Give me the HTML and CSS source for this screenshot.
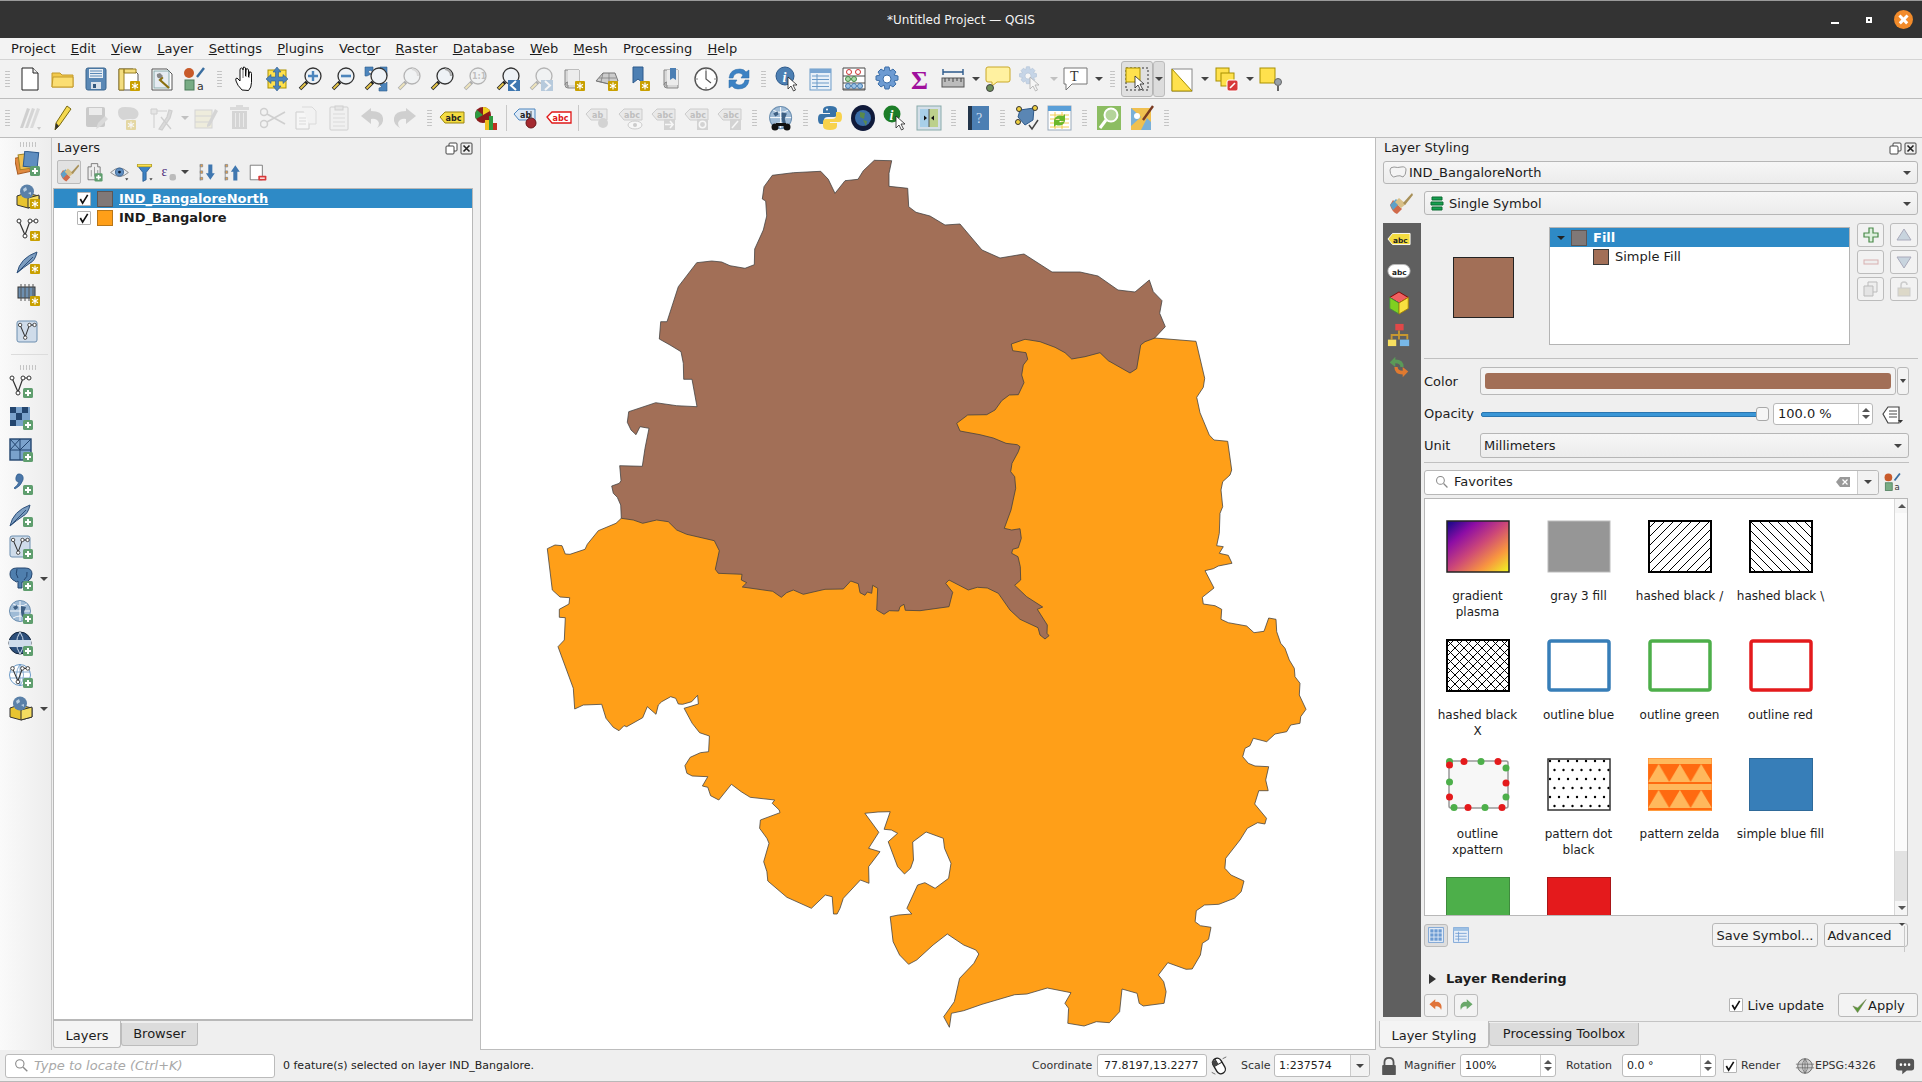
FILE: index.html
```html
<!DOCTYPE html>
<html lang="en">
<head>
<meta charset="utf-8">
<title>*Untitled Project — QGIS</title>
<link rel="stylesheet" href="styles.css">
</head>
<body>
<svg class="defs" xmlns="http://www.w3.org/2000/svg">
<defs>
<linearGradient id="plasma" x1="0" y1="0" x2="1" y2="1"><stop offset="0" stop-color="#0d0887"/><stop offset=".25" stop-color="#8d0da5"/><stop offset=".5" stop-color="#cc4778"/><stop offset=".75" stop-color="#f89540"/><stop offset="1" stop-color="#f0f921"/></linearGradient>
<pattern id="hf" width="9" height="9" patternUnits="userSpaceOnUse"><path d="M-1 10L10-1M-1 1L1-1M8 10l2-2" stroke="#000" stroke-width="1"/></pattern>
<pattern id="hb" width="9" height="9" patternUnits="userSpaceOnUse"><path d="M-1-1L10 10M-1 8l2 2M8-1l2 2" stroke="#000" stroke-width="1"/></pattern>
<pattern id="hx" width="9" height="9" patternUnits="userSpaceOnUse"><path d="M-1 10L10-1M-1-1L10 10" stroke="#000" stroke-width="1"/></pattern>
<pattern id="dots" width="9" height="18" patternUnits="userSpaceOnUse"><circle cx="3" cy="3" r="1.200" fill="#000"/><circle cx="7.500" cy="12" r="1.200" fill="#000"/></pattern>
<pattern id="zel" width="21.3" height="26" patternUnits="userSpaceOnUse"><rect width="21.3" height="26" fill="#ff6a10"/><rect width="21.3" height="6" fill="#ffb85c"/><path d="M10.6 6L21.3 24H0z" fill="#ffb85c"/></pattern>
<g id="gb"><rect width="10" height="10" rx="1" fill="#c9a000"/><path d="M5 1.5v7M2 3.2l6 3.6M2 6.8l6-3.6" stroke="#fff" stroke-width="1.2"/></g>
<g id="pb"><rect width="10" height="10" rx="1.5" fill="#5f9e6e"/><path d="M5 2v6M2 5h6" stroke="#fff" stroke-width="2"/></g>
<g id="cur"><path d="M0 0v12l3-3 2.5 5 2-1-2.5-5H9z" fill="#fff" stroke="#222" stroke-width=".8"/></g>
<g id="mg"><circle cx="16" cy="10" r="8" fill="#eef2f6" stroke="#333" stroke-width="1.3"/><path d="M10 16L3 23" stroke="#222" stroke-width="3.6"/><path d="M8.5 17.5L3.5 22.5" stroke="#e8c84a" stroke-width="1.8"/></g>
<g id="vv"><path d="M4 5l6 14 5-14h6" fill="none" stroke="#333" stroke-width="1.2"/><circle cx="4" cy="5" r="2" fill="#fff" stroke="#333"/><circle cx="15" cy="5" r="2" fill="#fff" stroke="#333"/><circle cx="21" cy="5" r="2" fill="#fff" stroke="#333"/><circle cx="10" cy="20" r="2" fill="#fff" stroke="#333"/></g>
<g id="gl"><circle cx="12" cy="12" r="10.5" fill="#9fbbd6" stroke="#6c8fb0"/><path d="M2 12h20M12 2v20M5 5q7 4 14 0M5 19q7-4 14 0" fill="none" stroke="#fff" stroke-width=".9"/><path d="M5 8l4-2 1 3-3 2zM13 7l5 1-2 5 1 4-3 1-1-5z" fill="#3e5f82"/></g>
<g id="fe"><path d="M2 24Q5 9 22 3q-2 9-7 11-6 4-13 10z" fill="#7c9dc0" stroke="#2d4f7a"/><path d="M3 23L18 8" stroke="#2d4f7a"/></g>
<g id="bx"><path d="M2 12l9-3 13 3v9l-11 3-11-3z" fill="#e8c430" stroke="#333"/><path d="M13 24V14l11-3v10z" fill="#f4dc60" stroke="#333"/><circle cx="12" cy="7.5" r="7" fill="#5a80a8"/><path d="M8 5l3-2 1 3-3 2zM13 9l3-1 0 3z" fill="#b8cde0"/></g>
<g id="sc"><path d="M4 4h14v18H7q-3 0-3-3z" fill="#d8d8d8" stroke="#888"/><path d="M4 19q0-3 3-3v6" fill="#b0b0b0" stroke="#888"/><path d="M7 4h11v15H7z" fill="#ececec"/></g>
<symbol id="new" viewBox="0 0 26 26"><path d="M5 2h11l5 5v17H5z" fill="#fff" stroke="#222"/><path d="M16 2v5h5" fill="#eee" stroke="#222"/></symbol>
<symbol id="open" viewBox="0 0 26 26"><path d="M2 21V7h8l2 2h11v12z" fill="#f2c94c" stroke="#c39a2a"/><path d="M3 11h20v10H2z" fill="#fbde72" stroke="#c39a2a"/></symbol>
<symbol id="save" viewBox="0 0 26 26"><rect x="3" y="2" width="20" height="22" rx="2" fill="#5a88b5" stroke="#39648e"/><rect x="6" y="3" width="14" height="9" fill="#e8eef4"/><path d="M7 5h12M7 7.5h12M7 10h12" stroke="#5a88b5"/><rect x="8" y="16" width="10" height="7" fill="#d7e0ea"/><rect x="10" y="18" width="3" height="4" fill="#33587e"/></symbol>
<symbol id="lay" viewBox="0 0 26 26"><path d="M3 3h14l5 5v16H3z" fill="#fff" stroke="#555"/><path d="M3 3h5v21H3zM8 3h12v4H8z" fill="#f3dd80" stroke="#997f20"/><use href="#gb" x="14" y="15"/></symbol>
<symbol id="lm" viewBox="0 0 26 26"><path d="M3 3h15l5 5v16H3z" fill="#fff" stroke="#555"/><rect x="5" y="5" width="15" height="17" fill="#e6ecf2" stroke="#8aa"/><path d="M10 9l3 3-2 2 9 8" stroke="#8a7010" stroke-width="2.2" fill="none"/><path d="M8 8q-1 5 4 4l2-2-3-3z" fill="#888"/></symbol>
<symbol id="sty" viewBox="0 0 26 26"><circle cx="7" cy="7" r="5" fill="#c85a2a"/><path d="M15 11L22 2" stroke="#3a6ea0" stroke-width="2.4"/><rect x="3" y="14" width="9" height="10" fill="#78ac84" stroke="#4a7a58"/><text class="t11" x="15" y="24">a</text></symbol>
<symbol id="hand" viewBox="0 0 26 26"><g transform="translate(2 0)"><path d="M9 24q-5-5-6-9-1-3 1-3l3 3V4q0-2 1.500-2t1.500 2l.5-3q1.500 0 2 1v8l.5-7q2-1 2.500 1v7l1-5q2-.5 2 1.500v9q0 5-3 8z" fill="#fff" stroke="#111"/><path d="M10 4v8M13 3v8M16 5v7" stroke="#111" stroke-width=".6"/></g></symbol>
<symbol id="pan" viewBox="0 0 26 26"><rect x="4" y="4" width="18" height="18" fill="#ffe14d" stroke="#aa9000"/><path d="M13 1l4 5h-2.500v5H19V8.500l5 4.500-5 4.500V15h-4.500v5H17l-4 5-4-5h2.500v-5H7v2.500L2 13l5-4.500V11h4.500V6H9z" fill="#4c85bd" stroke="#2d5a8c" stroke-width=".6"/></symbol>
<symbol id="zi" viewBox="0 0 26 26"><use href="#mg"/><path d="M16 5v10M11 10h10" stroke="#4c85bd" stroke-width="2.4"/></symbol>
<symbol id="zo" viewBox="0 0 26 26"><use href="#mg"/><path d="M11 10h10" stroke="#4c85bd" stroke-width="2.6"/></symbol>
<symbol id="zf" viewBox="0 0 26 26"><path d="M2 1h8v5L7 4 5 6l3 2-4 2H2zM24 1v9h-3l-1-2 2-3-2-2-3 2V1zM24 25h-8v-3l3-1-2-2 3-3 2 2 2-2z" fill="#4c85bd" stroke="#2d5a8c" stroke-width=".6"/><use href="#mg"/></symbol>
<symbol id="zl" viewBox="0 0 26 26"><use href="#mg"/><path d="M16 3q6 1 6 7" fill="none" stroke="#aaa" stroke-width="2"/></symbol>
<symbol id="zn" viewBox="0 0 26 26"><use href="#mg"/><text class="t8" x="10" y="13">1:1</text></symbol>
<symbol id="zp" viewBox="0 0 26 26"><use href="#mg"/><rect x="13" y="14" width="12" height="11" fill="#3f77b0"/><path d="M21 15l-5 4.500 5 4.500" fill="none" stroke="#fff" stroke-width="2"/></symbol>
<symbol id="zx" viewBox="0 0 26 26"><use href="#mg"/><rect x="13" y="14" width="12" height="11" fill="#3f77b0"/><path d="M17 15l5 4.500-5 4.500" fill="none" stroke="#fff" stroke-width="2"/></symbol>
<symbol id="nm" viewBox="0 0 26 26"><use href="#sc"/><use href="#gb" x="14" y="15"/></symbol>
<symbol id="d3" viewBox="0 0 26 26"><path d="M2 15l7-8h12l3 8-9 3z" fill="#ccc" stroke="#777"/><path d="M9 7l-2 9M15 7l0 11M5 12h17M3 15l12 3" stroke="#777" stroke-width=".7"/><use href="#gb" x="14" y="15"/></symbol>
<symbol id="nb" viewBox="0 0 26 26"><path d="M6 1h10v16l-5-4-5 4z" fill="#4c7fb3" stroke="#2d5a8c"/><use href="#gb" x="13" y="15"/></symbol>
<symbol id="sb" viewBox="0 0 26 26"><use href="#sc"/><path d="M10 2h6v12l-3-2-3 2z" fill="#4c7fb3"/></symbol>
<symbol id="clk" viewBox="0 0 26 26"><circle cx="13" cy="13" r="11" fill="#fff" stroke="#555" stroke-width="1.4"/><path d="M13 5v8l5 4" fill="none" stroke="#555" stroke-width="1.2"/><path d="M13 3v2M13 21v2M3 13h2M21 13h2" stroke="#888"/></symbol>
<symbol id="ref" viewBox="0 0 26 26"><path d="M3 12q1-9 11-9 4 0 6 3l3-2v8h-8l2-3q-2-2-4-2-5 0-6 5z" fill="#3c82c4" stroke="#2a68a4" stroke-width=".5"/><path d="M23 14q-1 9-11 9-4 0-6-3l-3 2v-8h8l-2 3q2 2 4 2 5 0 6-5z" fill="#3c82c4" stroke="#2a68a4" stroke-width=".5"/></symbol>
<symbol id="idn" viewBox="0 0 26 26"><circle cx="10" cy="10" r="9" fill="#4c7fb3" stroke="#2d5a8c"/><text class="ti" x="7.500" y="16">i</text><use href="#cur" x="13" y="11"/></symbol>
<symbol id="tbl" viewBox="0 0 26 26"><rect x="2" y="3" width="21" height="21" fill="#e8f0f8" stroke="#6d9bc8"/><rect x="2" y="3" width="21" height="4" fill="#7aa6d2"/><path d="M4 10h17M4 13.500h17M4 17h17M4 20.500h17M9 8v15" stroke="#6d9bc8"/></symbol>
<symbol id="aba" viewBox="0 0 26 26"><path d="M2 2v22h22V2" fill="#fff" stroke="#555"/><path d="M2 2h22M2 23h22M2 10h22M2 17h22" stroke="#444"/><circle cx="8" cy="6" r="2.500" fill="#fff" stroke="#c33"/><circle cx="17" cy="6" r="2.500" fill="#fff" stroke="#c33"/><circle cx="7" cy="13" r="2.500" fill="#a8d8a8" stroke="#484"/><circle cx="13" cy="13" r="2.500" fill="#a8d8a8" stroke="#484"/><circle cx="7" cy="20" r="2.500" fill="#9cc4e8" stroke="#47a"/><circle cx="13" cy="20" r="2.500" fill="#9cc4e8" stroke="#47a"/><circle cx="19" cy="20" r="2.500" fill="#9cc4e8" stroke="#47a"/></symbol>
<symbol id="gear" viewBox="0 0 26 26"><path d="M11 1h4l1 4 3-2 3 3-2 3 4 1v4l-4 1 2 3-3 3-3-2-1 4h-4l-1-4-3 2-3-3 2-3-4-1v-4l4-1-2-3 3-3 3 2z" fill="#6d9bd2" stroke="#3c6ea8"/><circle cx="13" cy="13" r="4" fill="#fff" stroke="#3c6ea8"/></symbol>
<symbol id="sum" viewBox="0 0 26 26"><text class="ts" x="4" y="23">Σ</text></symbol>
<symbol id="rul" viewBox="0 0 26 26"><rect x="2" y="12" width="22" height="9" fill="#bcbcbc" stroke="#555"/><path d="M5 12v4M9 12v3M13 12v4M17 12v3M21 12v4" stroke="#444"/><path d="M3 6h20M3 3v6M23 3v6" stroke="#2d5a8c" stroke-width="1.4"/></symbol>
<symbol id="tip" viewBox="0 0 26 26"><path d="M3 1h20q2 0 2 2v11q0 2-2 2H12l-5 4V16H3q-2 0-2-2V3q0-2 2-2z" fill="#fff1a0" stroke="#c9a828"/><circle cx="5" cy="22" r="3.500" fill="#6d8f5a" stroke="#444"/></symbol>
<symbol id="act" viewBox="0 0 26 26"><use href="#gear" width="20" height="20"/><use href="#cur" x="12" y="11"/></symbol>
<symbol id="tx" viewBox="0 0 26 26"><path d="M1 2h23v16H9l-6 6v-6H1z" fill="#fff" stroke="#777"/><text class="tt" x="7" y="15">T</text></symbol>
<symbol id="sel" viewBox="0 0 26 26"><rect x="2" y="2" width="22" height="22" fill="none" stroke="#333" stroke-dasharray="2 2"/><rect x="2" y="2" width="14" height="14" fill="#ffe14d" stroke="#a89000"/><use href="#cur" x="11" y="10"/></symbol>
<symbol id="spo" viewBox="0 0 26 26"><rect x="3" y="3" width="20" height="22" fill="#fff" stroke="#888"/><path d="M3 3v22h20z" fill="#ffe14d" stroke="#a89000"/></symbol>
<symbol id="dsl" viewBox="0 0 26 26"><rect x="2" y="2" width="13" height="13" fill="#ffe14d" stroke="#a89000"/><rect x="7" y="7" width="13" height="13" fill="#ffe14d" stroke="#a89000"/><rect x="13" y="14" width="11" height="11" rx="2" fill="#d8393a" stroke="#fff"/><path d="M16 22l5-5" stroke="#fff" stroke-width="1.6"/></symbol>
<symbol id="spi" viewBox="0 0 26 26"><rect x="1" y="2" width="15" height="15" fill="#ffe14d" stroke="#a89000"/><circle cx="19" cy="16" r="3.500" fill="#98a0a8" stroke="#666"/><path d="M19 20v5" stroke="#666" stroke-width="2"/></symbol>
<symbol id="ced" viewBox="0 0 26 26"><path d="M3 23L10 3l3 1-7 19z" fill="#888"/><path d="M8 23L15 3l3 1-7 19z" fill="#999"/><path d="M13 23L20 3l3 1-7 19z" fill="#aaa"/><path d="M20 22l2 3 2-3z" fill="#777"/></symbol>
<symbol id="pen" viewBox="0 0 26 26"><path d="M5 25l1-7L17 1l4 3L9 21z" fill="#f5d94e" stroke="#7a6a10"/><path d="M5 25l1-7 3 3z" fill="#333"/></symbol>
<symbol id="sed" viewBox="0 0 26 26"><rect x="3" y="2" width="19" height="20" rx="2" fill="#777"/><rect x="6" y="3" width="13" height="7" fill="#ddd"/><path d="M13 24l2-6 7-7 3 3-7 7z" fill="#aaa"/></symbol>
<symbol id="spa" viewBox="0 0 26 26"><path d="M2 7q0-5 7-5 6 0 9 1 6 3 4 8-2 4-7 3-4 0-8 1-5-2-5-8z" fill="#999"/><use href="#gb" x="10" y="15"/></symbol>
<symbol id="dig" viewBox="0 0 26 26"><path d="M2 4h6v5H2zM5 9v14M8 6h10" stroke="#888" fill="#ccc"/><path d="M10 24l8-12 2-7 3 1-2 7-8 12zM12 12l10 12" fill="#aaa" stroke="#888" stroke-width="1.300"/></symbol>
<symbol id="mod" viewBox="0 0 26 26"><rect x="1" y="5" width="17" height="18" fill="#e6e0b0" stroke="#999"/><path d="M1 11h17M1 17h17" stroke="#999"/><path d="M13 20L21 4l3 2-8 15-3 1z" fill="#999"/></symbol>
<symbol id="del" viewBox="0 0 26 26"><rect x="3" y="2" width="19" height="3" fill="#aaa"/><rect x="9" y="0" width="7" height="3" fill="#aaa"/><path d="M5 6h15v18H5z" fill="#999"/><path d="M8.500 8v14M12.500 8v14M16.500 8v14" stroke="#ddd"/></symbol>
<symbol id="cut" viewBox="0 0 26 26"><circle cx="4" cy="7" r="3.500" fill="none" stroke="#888" stroke-width="1.500"/><circle cx="4" cy="19" r="3.500" fill="none" stroke="#888" stroke-width="1.500"/><path d="M7 9l18 10M7 17L25 7" stroke="#888" stroke-width="1.600"/></symbol>
<symbol id="cop" viewBox="0 0 26 26"><path d="M3 7h10l3 3v14H3z" fill="#fff" stroke="#888"/><path d="M9 2h10l4 4v13h-7" fill="#f4f4f4" stroke="#aaa"/><path d="M6 13h7M6 16h7M6 19h7" stroke="#aaa"/></symbol>
<symbol id="pas" viewBox="0 0 26 26"><rect x="4" y="2" width="18" height="23" rx="1" fill="#eee" stroke="#888"/><rect x="9" y="1" width="8" height="4" fill="#ccc" stroke="#888"/><path d="M7 9h12M7 13h12M7 17h12M7 21h12" stroke="#aaa"/></symbol>
<symbol id="und" viewBox="0 0 26 26"><path d="M12 3L2 11l10 8v-5q6-1 8 4 0 3-2 5 7-4 6-10-1-7-12-7z" fill="#888"/></symbol>
<symbol id="red" viewBox="0 0 26 26"><path d="M14 3l10 8-10 8v-5q-6-1-8 4 0 3 2 5-7-4-6-10 1-7 12-7z" fill="#888"/></symbol>
<symbol id="abc" viewBox="0 0 26 26"><path d="M1 12l5-5h19v11H6z" fill="#f4dc40" stroke="#9a8410"/><text class="t8b" x="6.500" y="16">abc</text></symbol>
<symbol id="pie" viewBox="0 0 26 26"><g transform="translate(2 0)"><circle cx="8" cy="10" r="8" fill="#8a1c1c"/><path d="M8 10V2a8 8 0 0 1 7 4z" fill="#f0d020"/><path d="M8 10L1 14a8 8 0 0 1 1-9z" fill="#2e9a40"/><rect x="10" y="15" width="4" height="10" fill="#f0c020"/><rect x="14" y="11" width="4" height="14" fill="#2e9a40"/><rect x="18" y="18" width="4" height="7" fill="#c03020"/></g></symbol>
<symbol id="abb" viewBox="0 0 26 26"><path d="M1 9l5-5h16v11H6z" fill="#dbe8f6" stroke="#4c85bd"/><text class="t8b" x="7" y="13">ab</text><circle cx="18" cy="18" r="5" fill="#a42a30" stroke="#6a1518"/><path d="M18 6v8" stroke="#555"/></symbol>
<symbol id="abr" viewBox="0 0 26 26"><path d="M1 12l5-5h19v11H6z" fill="#fff" stroke="#e01818" stroke-width="1.300"/><text class="t8r" x="6.500" y="16">abc</text></symbol>
<symbol id="abg" viewBox="0 0 26 26"><path d="M1 9l5-5h16v11H6z" fill="#ddd" stroke="#999"/><text class="t8g" x="7" y="13">ab</text><circle cx="18" cy="18" r="5" fill="#aaa"/></symbol>
<symbol id="abe" viewBox="0 0 26 26"><path d="M1 9l5-5h18v11H6z" fill="#ddd" stroke="#999"/><text class="t8g" x="6" y="13">abc</text><ellipse cx="17" cy="20" rx="7" ry="4" fill="#fff" stroke="#999"/><circle cx="17" cy="20" r="2" fill="#999"/></symbol>
<symbol id="abm" viewBox="0 0 26 26"><path d="M1 9l5-5h18v11H6z" fill="#ddd" stroke="#999"/><text class="t8g" x="6" y="13">abc</text><rect x="13" y="14" width="11" height="11" fill="#aaa"/><path d="M14 19.500h8M19 16l3 3.500-3 3.500" fill="none" stroke="#fff" stroke-width="1.600"/></symbol>
<symbol id="abo" viewBox="0 0 26 26"><path d="M1 9l5-5h18v11H6z" fill="#ddd" stroke="#999"/><text class="t8g" x="6" y="13">abc</text><rect x="13" y="14" width="11" height="11" fill="#aaa"/><circle cx="18.500" cy="19.500" r="3.200" fill="none" stroke="#fff" stroke-width="1.500"/></symbol>
<symbol id="abp" viewBox="0 0 26 26"><path d="M1 9l5-5h18v11H6z" fill="#ddd" stroke="#999"/><text class="t8g" x="6" y="13">abc</text><rect x="13" y="14" width="11" height="11" fill="#aaa"/><path d="M15 23l6-7" stroke="#fff" stroke-width="1.600"/></symbol>
<symbol id="bin" viewBox="0 0 26 26"><use href="#gl" transform="scale(1.050)"/><circle cx="7" cy="22" r="3.500" fill="#111"/><circle cx="19" cy="22" r="3.500" fill="#111"/><path d="M8 18h10v3H8z" fill="#111"/></symbol>
<symbol id="py" viewBox="0 0 26 26"><path d="M13 1q-7 0-7 4v3h7v1H4q-3 0-3 5t3 5h3v-4q0-3 4-3h6q3 0 3-3V5q0-4-7-4z" fill="#3873a8"/><path d="M13 25q7 0 7-4v-3h-7v-1h9q3 0 3-5t-3-5h-3v4q0 3-4 3H9q-3 0-3 3v4q0 4 7 4z" fill="#f8d24c"/><circle cx="10" cy="4.500" r="1" fill="#fff"/></symbol>
<symbol id="ear" viewBox="0 0 26 26"><ellipse cx="13" cy="13" rx="12" ry="13" fill="#101a3a"/><circle cx="13" cy="13" r="8" fill="#3a6ea8"/><path d="M10 7l5 1-1 6-4-2zM13 15l4 1-1 5z" fill="#5a8a4a"/></symbol>
<symbol id="idg" viewBox="0 0 26 26"><circle cx="9" cy="9" r="8.500" fill="#1c7d28"/><text class="ti" x="6.500" y="15">i</text><use href="#cur" x="13" y="11"/></symbol>
<symbol id="swp" viewBox="0 0 26 26"><rect x="1" y="1" width="24" height="24" fill="#d4dfe8" stroke="#8aa"/><rect x="4" y="4" width="9" height="18" fill="#a8cfe8"/><rect x="13" y="4" width="9" height="18" fill="#bcd08c"/><path d="M13 4v18" stroke="#555"/><path d="M11 13l-3-2.500v5zM15 13l3-2.500v5z" fill="#111"/></symbol>
<symbol id="hlp" viewBox="0 0 26 26"><rect x="3" y="1" width="21" height="24" fill="#4c7fb3"/><rect x="3" y="1" width="4" height="24" fill="#23354a"/><text class="tq" x="11" y="18">?</text></symbol>
<symbol id="qas" viewBox="0 0 26 26"><path d="M6 5l14-2-1 12-8 5-7-8z" fill="#5a86b4" stroke="#2d5a8c"/><circle cx="5" cy="4" r="2.500" fill="#f0d040" stroke="#333"/><circle cx="21" cy="3" r="2.500" fill="#f0d040" stroke="#333"/><circle cx="4" cy="17" r="2.500" fill="#f0d040" stroke="#333"/><path d="M15 20l3 4 6-9" fill="none" stroke="#444" stroke-width="1.500"/></symbol>
<symbol id="tsy" viewBox="0 0 26 26"><rect x="1" y="1" width="23" height="24" fill="#fff" stroke="#9ab"/><rect x="1" y="1" width="23" height="5" fill="#5a9fd8"/><path d="M3 10h19M3 14h19M3 18h19M3 22h19M8 7v17M15 7v17" stroke="#f0c840" stroke-width=".9"/><path d="M7 15q2-6 9-4l2-2v7h-7l2-2q-3-1-5 1zM18 16q-2 6-9 4l-2 2v-7h7l-2 2q3 1 5-1z" fill="#6ab82c"/></symbol>
<symbol id="osm" viewBox="0 0 26 26"><rect x="1" y="1" width="24" height="24" fill="#8cbd62"/><circle cx="15" cy="10" r="6.500" fill="#b4d49a" stroke="#fff" stroke-width="2"/><path d="M10 15l-6 8" stroke="#fff" stroke-width="3"/></symbol>
<symbol id="qc" viewBox="0 0 26 26"><rect x="2" y="3" width="20" height="22" fill="#f0c050"/><path d="M2 3l10 9L2 21zM12 25l6-12 4 4v8z" fill="#7ab0d8"/><circle cx="8" cy="11" r="3" fill="#fff"/><path d="M14 15L24 1" stroke="#7a3a20" stroke-width="2.400"/></symbol>
<symbol id="dsm" viewBox="0 0 26 26"><rect x="1" y="6" width="13" height="16" transform="rotate(-12 7 14)" fill="#e08a40" stroke="#a85a20"/><rect x="4" y="3" width="13" height="15" transform="rotate(-8 10 10)" fill="#f0c050" stroke="#a08020"/><rect x="9" y="1" width="14" height="15" transform="rotate(6 16 8)" fill="#5f8ec0" stroke="#2d5a8c"/><use href="#pb" x="15" y="15"/></symbol>
<symbol id="gpk" viewBox="0 0 26 26"><use href="#bx"/><use href="#gb" x="15" y="15"/></symbol>
<symbol id="vg" viewBox="0 0 26 26"><use href="#vv"/><use href="#gb" x="15" y="15"/></symbol>
<symbol id="feg" viewBox="0 0 26 26"><use href="#fe"/><use href="#gb" x="15" y="15"/></symbol>
<symbol id="chg" viewBox="0 0 26 26"><rect x="3" y="6" width="17" height="11" fill="#6d8fb0" stroke="#333"/><path d="M6 3v17M10 3v17M14 3v17M18 3v17" stroke="#555"/><use href="#gb" x="15" y="15"/></symbol>
<symbol id="vm" viewBox="0 0 26 26"><rect x="2" y="2" width="20" height="21" rx="2" fill="#cfdcea" stroke="#6d8fb0"/><use href="#vv" transform="scale(.85) translate(2 2)"/></symbol>
<symbol id="av" viewBox="0 0 26 26"><use href="#vv"/><use href="#pb" x="15" y="15"/></symbol>
<symbol id="ar" viewBox="0 0 26 26"><rect x="2" y="2" width="20" height="19" fill="#7aa2cc"/><path d="M2 2h6v6H2zM14 2h6v6h-6zM8 8h6v7H8zM2 15h6v6H2z" fill="#23456e"/><use href="#pb" x="15" y="15"/></symbol>
<symbol id="am" viewBox="0 0 26 26"><rect x="2" y="2" width="21" height="21" fill="#7aa2cc" stroke="#23456e" stroke-width="1.400"/><path d="M12 2v21M2 13h21M2 2l10 11M12 2L2 13M12 13L23 2" stroke="#23456e"/><use href="#pb" x="15" y="15"/></symbol>
<symbol id="ad" viewBox="0 0 26 26"><path d="M8 7q1-4 4-3 4 1 3 6-2 6-8 9l-1-1q4-3 5-6-4 0-3-5z" fill="#4a76a8" stroke="#2d5a8c" stroke-width=".7"/><use href="#pb" x="15" y="15"/></symbol>
<symbol id="af" viewBox="0 0 26 26"><use href="#fe"/><use href="#pb" x="15" y="15"/></symbol>
<symbol id="avm" viewBox="0 0 26 26"><rect x="2" y="2" width="20" height="21" rx="2" fill="#cfdcea" stroke="#6d8fb0"/><use href="#vv" transform="scale(.85) translate(2 2)"/><use href="#pb" x="15" y="15"/></symbol>
<symbol id="apg" viewBox="0 0 26 26"><path d="M2 8q0-6 7-6h8q7 0 7 6 0 5-4 7v6h-3v-5h-3v6h-4v-7Q8 17 7 15 2 13 2 8z" fill="#4f7fae" stroke="#23456e"/><path d="M9 3q-2 5 1 9M19 6q1 5-3 8" fill="none" stroke="#23456e"/><use href="#pb" x="15" y="15"/></symbol>
<symbol id="aw" viewBox="0 0 26 26"><use href="#gl"/><use href="#pb" x="15" y="15"/></symbol>
<symbol id="awc" viewBox="0 0 26 26"><circle cx="12" cy="12" r="11" fill="#2d4f7a" stroke="#12233a"/><path d="M1 9h22v7H1z" fill="#cfdcea"/><path d="M12 1q-7 11 0 22M12 1q7 11 0 22" fill="none" stroke="#cfdcea"/><use href="#pb" x="15" y="15"/></symbol>
<symbol id="awf" viewBox="0 0 26 26"><circle cx="12" cy="12" r="10.500" fill="#fff" stroke="#6d9bc8"/><path d="M2 9h20M2 15h20M12 1v22M12 1q-7 11 0 22M12 1q7 11 0 22" fill="none" stroke="#6d9bc8" stroke-width=".8"/><use href="#vv" transform="scale(.9) translate(1 1)"/><use href="#pb" x="15" y="15"/></symbol>
<symbol id="brs" viewBox="0 0 26 26"><path d="M5 10l9 9-5 5q-5-2-7-9z" fill="#d06a4a"/><path d="M2 15l6-6 4 4-7 7z" fill="#5fa0c8"/><path d="M13 18l-6-6 4-4 7 6z" fill="#d8c088"/><path d="M15 13l9-10 1 2-8 10z" fill="#a89058"/></symbol>
<symbol id="grp" viewBox="0 0 26 26"><path d="M5 6h4V2h8v4h3v16H5z" fill="#eee" stroke="#666"/><path d="M9 10v8M13 6v12M17 10v8" stroke="#888"/><use href="#pb" x="13" y="14"/></symbol>
<symbol id="eye" viewBox="0 0 26 26"><path d="M2 13q11-11 22 0-11 10-22 0z" fill="#e4eaf0" stroke="#777"/><circle cx="13" cy="12.500" r="5" fill="#5f8ec0" stroke="#2d5a8c"/><circle cx="13" cy="12.500" r="1.800" fill="#12233a"/><path d="M20 20l2 3 2-3z" fill="#444"/></symbol>
<symbol id="fil" viewBox="0 0 26 26"><path d="M4 4h18l-7 9v9l-4 2V13z" fill="#3c82c4" stroke="#2a5a8c"/><rect x="4" y="3" width="18" height="3" fill="#ffe14d" stroke="#a89000" stroke-width=".6"/><path d="M19 20l2 3 2-3z" fill="#444"/></symbol>
<symbol id="eps" viewBox="0 0 26 26"><text class="te" x="3" y="17">ε</text><rect x="13" y="15" width="8" height="8" rx="3" fill="#bbb"/></symbol>
<symbol id="exa" viewBox="0 0 26 26"><path d="M4 3v20M4 3h3v3H4zM4 11h3v3H4zM4 19h3v3H4z" fill="#f0a040" stroke="#888"/><path d="M14 3h5v11h3l-5.500 8L11 14h3z" fill="#3f77b0"/></symbol>
<symbol id="cola" viewBox="0 0 26 26"><path d="M4 3v20M4 3h3v3H4zM4 11h3v3H4zM4 19h3v3H4z" fill="#f0a040" stroke="#888"/><path d="M14 23h5V12h3L16.500 4 11 12h3z" fill="#3f77b0"/></symbol>
<symbol id="rem" viewBox="0 0 26 26"><path d="M4 4h15v18H4z" fill="#fff" stroke="#666"/><rect x="14" y="17" width="10" height="6" rx="1" fill="#d8393a"/><path d="M16 20h6" stroke="#fff" stroke-width="1.600"/></symbol>
<symbol id="slab" viewBox="0 0 26 26"><path d="M1 13l5-6h19v12H6z" fill="#f4dc40" stroke="#fff"/><text class="t8b" x="6.500" y="17">abc</text></symbol>
<symbol id="sdia" viewBox="0 0 26 26"><rect x="1" y="6" width="24" height="14" rx="7" fill="#fff" stroke="#bbb"/><text class="t8b" x="5.500" y="17">abc</text></symbol>
<symbol id="s3d" viewBox="0 0 26 26"><path d="M13 1l10 6-10 6L3 7z" fill="#f06060" stroke="#800"/><path d="M3 7l10 6v12L3 19z" fill="#80d020" stroke="#484"/><path d="M23 7l-10 6v12l10-6z" fill="#f8e040" stroke="#a80"/></symbol>
<symbol id="sfl" viewBox="0 0 26 26"><rect x="9" y="1" width="9" height="7" fill="#e04848"/><path d="M13 8v5M5 18v-5h17v5M13 13v5" fill="none" stroke="#c89830" stroke-width="2"/><rect x="1" y="18" width="9" height="7" fill="#f8e060"/><rect x="14" y="18" width="10" height="7" fill="#78b8e8"/></symbol>
<symbol id="shi" viewBox="0 0 26 26"><path d="M3 8l6-6v3q9 0 9 8h-3.500q0-4-5.500-4v4z" fill="#5a9a58"/><path d="M23 18l-6 6v-3q-9 0-9-8h3.500q0 4 5.500 4v-4z" fill="#e07a30"/></symbol>
<symbol id="gi" viewBox="0 0 22 22"><rect x="2" y="2" width="18" height="18" fill="#e6eef8" stroke="#6d9bd2"/><g fill="#6d9bd2"><rect x="4" y="4" width="4" height="4"/><rect x="9" y="4" width="4" height="4"/><rect x="14" y="4" width="4" height="4"/><rect x="4" y="9" width="4" height="4"/><rect x="9" y="9" width="4" height="4"/><rect x="14" y="9" width="4" height="4"/><rect x="4" y="14" width="4" height="4"/><rect x="9" y="14" width="4" height="4"/><rect x="14" y="14" width="4" height="4"/></g></symbol>
<symbol id="li" viewBox="0 0 22 22"><rect x="2" y="2" width="18" height="18" fill="#e6eef8" stroke="#6d9bd2"/><rect x="2" y="2" width="18" height="4" fill="#9cc0e4"/><path d="M4 9h14M4 12.500h14M4 16h14M8 7v12" stroke="#6d9bd2"/></symbol>
<symbol id="ddf" viewBox="0 0 22 22"><path d="M1 11l5-7h11v16H6z" fill="#fff" stroke="#444" stroke-width="1.200"/><path d="M7 8h8M7 11h8M7 14h8" stroke="#444"/><path d="M16 17l2.500 3 2.500-3z" fill="#333"/></symbol>
<symbol id="lk" viewBox="0 0 22 22"><path d="M6 10V7q0-5 5-5t5 5v3" fill="none" stroke="#555" stroke-width="2"/><rect x="3.500" y="10" width="15" height="11" rx="1" fill="#555"/></symbol>
<symbol id="mse" viewBox="0 0 22 22"><g transform="rotate(-30 11 11)"><rect x="6" y="2" width="10" height="18" rx="5" fill="#fff" stroke="#222" stroke-width="1.500"/><path d="M6 9h10M11 2v7" stroke="#222"/><rect x="6" y="3" width="5" height="6" fill="#444"/></g><path d="M15 3l4-2M3 18l4 2" stroke="#666"/></symbol>
<symbol id="gls" viewBox="0 0 22 22"><circle cx="11" cy="11" r="8" fill="#d0d0d0" stroke="#666"/><path d="M1 9h20M1 13h20M11 3v16M11 3q-6 8 0 16M11 3q6 8 0 16" fill="none" stroke="#666" stroke-width=".8"/></symbol>
<symbol id="msg" viewBox="0 0 22 22"><path d="M4 3h14q3 0 3 3v7q0 3-3 3h-5l-5 4v-4H4q-3 0-3-3V6q0-3 3-3z" fill="#555"/><circle cx="6.500" cy="9.500" r="1.400" fill="#fff"/><circle cx="11" cy="9.500" r="1.400" fill="#fff"/><circle cx="15.500" cy="9.500" r="1.400" fill="#fff"/></symbol>
<symbol id="srch" viewBox="0 0 18 18"><circle cx="7" cy="7" r="5" fill="none" stroke="#888" stroke-width="1.300"/><path d="M11 11l5 5" stroke="#888" stroke-width="1.600"/></symbol>
<symbol id="chk" viewBox="0 0 13 13"><path d="M2.500 6.500l2.500 4.500 5.500-9" fill="none" stroke="#111" stroke-width="1.800"/></symbol>
<symbol id="flt" viewBox="0 0 13 13"><rect x="4" y="1" width="8" height="8" rx="1" fill="#fff" stroke="#444"/><rect x="1" y="4" width="8" height="8" rx="1" fill="#fff" stroke="#444"/></symbol>
<symbol id="cls" viewBox="0 0 13 13"><rect x="1" y="1" width="11" height="11" rx="1" fill="#eee" stroke="#444"/><path d="M3.500 3.500l6 6M9.500 3.500l-6 6" stroke="#222" stroke-width="1.600"/></symbol>
</defs>
</svg>

<div class="window">
  <header class="titlebar">
    <span></span>
    <span class="title">*Untitled Project — QGIS</span>
    <span class="winbtns"><i class="wmin"></i><i class="wmax"></i><i class="wcls"></i></span>
  </header>
  <nav class="menubar">
    <span class="m">Project</span><span class="m"><u>E</u>dit</span><span class="m"><u>V</u>iew</span><span class="m"><u>L</u>ayer</span><span class="m"><u>S</u>ettings</span><span class="m"><u>P</u>lugins</span><span class="m">Vect<u>o</u>r</span><span class="m"><u>R</u>aster</span><span class="m"><u>D</u>atabase</span><span class="m"><u>W</u>eb</span><span class="m"><u>M</u>esh</span><span class="m">Pr<u>o</u>cessing</span><span class="m"><u>H</u>elp</span>
  </nav>
  <div class="toolbar">
    <span class="h first"></span>
    <span class="b"><svg class="i"><use href="#new"/></svg></span><span class="b"><svg class="i"><use href="#open"/></svg></span><span class="b"><svg class="i"><use href="#save"/></svg></span><span class="b"><svg class="i"><use href="#lay"/></svg></span><span class="b"><svg class="i"><use href="#lm"/></svg></span><span class="b"><svg class="i"><use href="#sty"/></svg></span>
    <span class="h"></span>
    <span class="b"><svg class="i"><use href="#hand"/></svg></span><span class="b"><svg class="i"><use href="#pan"/></svg></span><span class="b"><svg class="i"><use href="#zi"/></svg></span><span class="b"><svg class="i"><use href="#zo"/></svg></span><span class="b"><svg class="i"><use href="#zf"/></svg></span><span class="b dis"><svg class="i"><use href="#zl"/></svg></span><span class="b"><svg class="i"><use href="#zl"/></svg></span><span class="b dis"><svg class="i"><use href="#zn"/></svg></span><span class="b"><svg class="i"><use href="#zp"/></svg></span><span class="b dis"><svg class="i"><use href="#zx"/></svg></span><span class="b"><svg class="i"><use href="#nm"/></svg></span><span class="b"><svg class="i"><use href="#d3"/></svg></span><span class="b"><svg class="i"><use href="#nb"/></svg></span><span class="b"><svg class="i"><use href="#sb"/></svg></span><span class="b"><svg class="i"><use href="#clk"/></svg></span><span class="b"><svg class="i"><use href="#ref"/></svg></span>
    <span class="h"></span>
    <span class="b"><svg class="i"><use href="#idn"/></svg></span><span class="b"><svg class="i"><use href="#tbl"/></svg></span><span class="b"><svg class="i"><use href="#aba"/></svg></span><span class="b"><svg class="i"><use href="#gear"/></svg></span><span class="b"><svg class="i"><use href="#sum"/></svg></span><span class="b"><svg class="i"><use href="#rul"/></svg></span><span class="ar"></span><span class="b"><svg class="i"><use href="#tip"/></svg></span><span class="b dis"><svg class="i"><use href="#act"/></svg></span><span class="ar dim"></span><span class="b"><svg class="i"><use href="#tx"/></svg></span><span class="ar"></span>
    <span class="h"></span>
    <span class="b on"><svg class="i"><use href="#sel"/></svg></span><span class="dropbtn"><i></i></span><span class="b"><svg class="i"><use href="#spo"/></svg></span><span class="ar"></span><span class="b"><svg class="i"><use href="#dsl"/></svg></span><span class="ar"></span><span class="b"><svg class="i"><use href="#spi"/></svg></span>
  </div>
  <div class="toolbar">
    <span class="h first"></span>
    <span class="b dis"><svg class="i"><use href="#ced"/></svg></span><span class="b"><svg class="i"><use href="#pen"/></svg></span><span class="b dis"><svg class="i"><use href="#sed"/></svg></span><span class="b dis"><svg class="i"><use href="#spa"/></svg></span><span class="b dis"><svg class="i"><use href="#dig"/></svg></span><span class="ar dim"></span><span class="b dis"><svg class="i"><use href="#mod"/></svg></span><span class="b dis"><svg class="i"><use href="#del"/></svg></span><span class="b dis"><svg class="i"><use href="#cut"/></svg></span><span class="b dis"><svg class="i"><use href="#cop"/></svg></span><span class="b dis"><svg class="i"><use href="#pas"/></svg></span><span class="b dis"><svg class="i"><use href="#und"/></svg></span><span class="b dis"><svg class="i"><use href="#red"/></svg></span>
    <span class="h short"></span>
    <span class="b"><svg class="i"><use href="#abc"/></svg></span><span class="b wide"><svg class="i"><use href="#pie"/></svg></span><span class="s"></span><span class="b"><svg class="i"><use href="#abb"/></svg></span><span class="b"><svg class="i"><use href="#abr"/></svg></span><span class="s"></span><span class="b faint"><svg class="i"><use href="#abg"/></svg></span><span class="b faint"><svg class="i"><use href="#abe"/></svg></span><span class="b faint"><svg class="i"><use href="#abm"/></svg></span><span class="b faint"><svg class="i"><use href="#abo"/></svg></span><span class="b faint"><svg class="i"><use href="#abp"/></svg></span>
    <span class="h tall"></span>
    <span class="b"><svg class="i"><use href="#bin"/></svg></span>
    <span class="h"></span>
    <span class="b"><svg class="i"><use href="#py"/></svg></span><span class="b"><svg class="i"><use href="#ear"/></svg></span><span class="b"><svg class="i"><use href="#idg"/></svg></span><span class="b"><svg class="i"><use href="#swp"/></svg></span>
    <span class="h"></span>
    <span class="b"><svg class="i"><use href="#hlp"/></svg></span>
    <span class="h"></span>
    <span class="b"><svg class="i"><use href="#qas"/></svg></span><span class="b"><svg class="i"><use href="#tsy"/></svg></span>
    <span class="h"></span>
    <span class="b"><svg class="i"><use href="#osm"/></svg></span><span class="b"><svg class="i"><use href="#qc"/></svg></span>
    <span class="h"></span>
  </div>

  <main class="work">
    <aside class="lefttb">
      <span class="vh"></span>
      <span class="lb top"><svg class="i"><use href="#dsm"/></svg></span>
      <span class="lb"><svg class="i"><use href="#gpk"/></svg></span>
      <span class="lb"><svg class="i"><use href="#vg"/></svg></span>
      <span class="lb"><svg class="i"><use href="#feg"/></svg></span>
      <span class="lb"><svg class="i"><use href="#chg"/></svg></span>
      <span class="lb last"><svg class="i"><use href="#vm"/></svg></span>
      <span class="vsep"></span>
      <span class="vh second"></span>
      <span class="lb2"><svg class="i"><use href="#av"/></svg></span>
      <span class="lb2"><svg class="i"><use href="#ar"/></svg></span>
      <span class="lb2"><svg class="i"><use href="#am"/></svg></span>
      <span class="lb2"><svg class="i"><use href="#ad"/></svg></span>
      <span class="lb2"><svg class="i"><use href="#af"/></svg></span>
      <span class="lb2"><svg class="i"><use href="#avm"/></svg></span>
      <span class="lb2"><svg class="i"><use href="#apg"/></svg><span class="ar"></span></span>
      <span class="lb2"><svg class="i"><use href="#aw"/></svg></span>
      <span class="lb2"><svg class="i"><use href="#awc"/></svg></span>
      <span class="lb2"><svg class="i"><use href="#awf"/></svg></span>
      <span class="lb2"><svg class="i"><use href="#bxi"/></svg><span class="ar"></span></span>
    </aside>

    <section class="layers">
      <div class="phead"><span>Layers</span><span class="pbtns"><svg class="pi"><use href="#flt"/></svg><svg class="pi"><use href="#cls"/></svg></span></div>
      <div class="ltools">
        <span class="lt on"><svg class="i2"><use href="#brs"/></svg></span><span class="lt"><svg class="i2"><use href="#grp"/></svg></span><span class="lt"><svg class="i2"><use href="#eye"/></svg></span><span class="lt"><svg class="i2"><use href="#fil"/></svg></span><span class="lt"><svg class="i2"><use href="#eps"/></svg></span><span class="ar sm"></span><span class="lt"><svg class="i2"><use href="#exa"/></svg></span><span class="lt"><svg class="i2"><use href="#cola"/></svg></span><span class="lt"><svg class="i2"><use href="#rem"/></svg></span>
      </div>
      <div class="ltree">
        <div class="lrow sel"><span class="cb"><svg><use href="#chk"/></svg></span><span class="sw north"></span><b class="u">IND_BangaloreNorth</b></div>
        <div class="lrow"><span class="cb"><svg><use href="#chk"/></svg></span><span class="sw south"></span><b>IND_Bangalore</b></div>
      </div>
      <div class="tabs"><span class="tab act w68">Layers</span><span class="tab w77">Browser</span></div>
    </section>

    <section class="map">
      <svg class="mapsvg" viewBox="481 138 894 911">
        <polygon class="north-p" points="621.3,518.3 620.7,505 617.3,497.3 613.3,493.3 611.7,486 619.3,483.3 621,480.7 619.7,465.7 642.3,466.3 645,448.3 649,428.3 640,426.7 636,434.7 631,430 627.3,422.3 628.7,411.7 655.7,402.7 676.7,405.7 697,406.7 692,379.3 683.7,379.3 683.3,363.3 681,351.7 670,345 659.3,339 660.7,321.7 667,321.7 678.3,286.7 696.7,262.7 711.7,261 721.7,262 730,265.7 745,268.3 754.3,264.7 754.7,249 763.3,230 766.7,216 765.7,201 762.3,199 764,186.7 772.3,175.3 793.3,172.7 820.7,171.3 828.3,179.3 835,193.3 845,180.7 858,179.3 863.3,170.7 874.3,160.3 891.7,160.7 889,173.3 889,186.3 907.7,188.3 908.7,206.7 916,212.3 930,216 945,225 960,224 982,250 1000,258 1024,254 1052,272 1080,272 1098,276 1118,290 1135,292 1149.3,280 1153.3,291.7 1162,300.7 1159.7,313.3 1165.3,326.7 1155,337.7 1060,660 640,600"/>
        <polygon class="south-p" points="621.3,518.3 633.3,520 642.7,523.3 656.7,520 668.3,521.7 676.7,530 686.7,534.3 714.3,540.7 719.3,550.7 715.3,569.3 718.3,573.3 742,574.3 741.3,580 746.7,582.7 742.3,587 772.7,591.3 781.3,597.3 786.7,592.7 793.3,590 803.3,594.3 825,589.3 843.3,589 850.7,581 858.3,583.7 860,592.7 865,595.3 867.3,592 871.7,593.3 872.7,585.3 877.7,588.3 876.7,610 884,614.3 889.3,610.7 898.7,611 900,606.7 904,604.3 905.3,610.3 920,610.7 949,606.7 952.7,592.3 945.7,583.3 949,580 968.3,590 977.3,587.3 987.3,588 998.3,593.3 1010,610 1020,619.3 1038,627.7 1040,635 1045,639 1049,635.7 1047,633.3 1047.3,625 1037.3,609.3 1042.7,607 1026.7,596.7 1014.7,585.3 1020.7,580 1020.3,566.7 1018,556.7 1011.7,553.3 1012.7,549.3 1018.3,547.7 1021.3,538.3 1020,528.7 1011.7,530 1004.3,528.3 1011,510 1015.7,488.3 1014.7,476.7 1010.7,471.7 1012,463.3 1018.3,451.7 1020,446.7 1017.3,444.7 1006,443.3 993.3,438 980,434.7 960,431 956.7,423.3 967.7,415 986.7,414.7 995,410 1001.7,400.7 1009.3,395 1018.3,394.7 1024,382.7 1021.7,375 1023.3,365 1027.7,359.3 1026,352.7 1012.7,350.7 1011.3,344 1025,339.3 1040,341.7 1055,347.3 1065,352.7 1071.7,359 1085,356.7 1100,352.7 1108.3,360.7 1130,373 1136.7,368.7 1140.7,345 1145,341.7 1155,338 1196,341.3 1204.7,378.3 1203.3,387.3 1196.7,397.3 1200,412.7 1209.3,435 1214,440 1227.7,441.3 1231.7,470 1230,475 1222.7,481.7 1221,490 1222.7,506.7 1220,513.3 1219.3,533.3 1216.7,545.7 1223.3,546.7 1219.3,553.3 1228.3,555.3 1232,563.3 1218.3,566 1213.3,568.7 1205,570.7 1214,588 1202.3,597.3 1203.3,604 1215,605.7 1221.7,609.3 1221,619.3 1228.3,622.7 1246.7,626 1254,632.7 1264,631.3 1268.7,618 1276,619.3 1276.7,631.7 1280.7,643.3 1285,648.3 1289.3,660 1294.3,668.3 1295,676.7 1300,683.3 1299.3,695 1306,709.3 1300.7,716.7 1300,723.3 1290.7,725 1286.7,731.7 1275,734 1266.7,741.7 1253.3,738.3 1250,745.7 1245,748.3 1242.7,756.7 1248.3,763.3 1255,766 1268.7,766.7 1265.7,780 1268.2,790.7 1258.8,790.7 1254.7,804 1266.5,818.3 1264.9,824 1257.6,822.7 1247.3,828.3 1240,840 1225.7,858.3 1224.9,868.3 1231,875 1244,881 1241.2,891.7 1234.3,898.3 1218.8,904.3 1204.5,905 1196.3,910.7 1195.1,921.7 1200.4,925.7 1211,927.3 1208.6,939.3 1202.4,943.3 1200.4,955 1192.2,969 1186.1,969.3 1167.8,962.7 1158.4,975 1163.7,981.7 1166.1,991.7 1164.1,1003.3 1143.3,1006 1139.2,1003.3 1137.1,993.3 1122,989 1119.6,1011.7 1109.4,1022.7 1096.3,1021.7 1084.1,1026 1067.8,1023.3 1068.6,1008.3 1064.9,1003.3 1071,992.7 1047.3,988 1026.9,994 1014.7,994.7 982,1004.3 963.7,1010.7 951.4,1013.3 949.4,1027.3 943.7,1016.7 954.3,1001.7 959.6,978.3 973.9,963.3 978.8,954 975.9,950 963.7,945 947.3,934 933.1,945 916.7,960 908.6,964.3 899.6,955 893.1,941.7 890.2,916.7 898.4,915 911.8,914 906.9,908.3 917.6,885 924.9,882.7 935.1,888.3 948.6,878.3 951,863.3 944.5,848.3 943.3,838.3 926.1,832 912.7,842 913.5,860 910.6,868.3 904.5,874 897.6,866.7 888.2,841.7 897.6,833.3 891.4,830 884.1,829.3 890.2,811.7 878,812 864.9,813.3 878.8,832.3 868.6,848.3 880,851.7 868.6,866.7 869,883.3 860.4,880 843.3,898.3 840,908.3 837.1,914 833.5,914 832.2,896.7 825.3,895 811.4,908.3 786.9,897.3 767.8,881 766.9,871.7 763.7,861.7 769,843.3 766.9,838.3 759.6,828.3 760.4,820 780,812.7 779.2,810 772.2,803.3 774.7,800 750.2,797.3 741.2,791.7 731.4,784.3 718.8,800 710.6,795.7 707.8,787.3 702.4,786 707.8,776.7 692.2,776 686.9,773.3 684.9,765.7 690.2,757.3 700.4,752.7 708.6,751.7 709.4,736 699.6,732.7 692.2,723.3 684.1,708.3 698.4,704 697.6,695.3 691.7,701.7 682.7,704.3 678.3,704 675.7,698.3 670.7,696.7 661.7,701.7 658.3,705 656,714.3 647.3,706.7 642.7,717.7 626.7,726.7 624,725.7 619,730.7 613.3,727.3 606,718.3 601.7,704.3 583.3,705 574.7,709 573.3,688.3 558,646.7 564.3,640 565.3,617.7 559.3,617.3 559.3,609.3 569,604 569.7,597.7 560,597 552.3,590 547.3,548.7 555,545 562,545.7 565.3,554 570,554.3 585,549.3 587.3,544.3 598.3,530.7 616,523.3"/>
      </svg>
    </section>

    <section class="styling">
      <div class="phead r"><span>Layer Styling</span><span class="pbtns"><svg class="pi"><use href="#flt"/></svg><svg class="pi"><use href="#cls"/></svg></span></div>
      <div class="combo top1"><svg class="lic" viewBox="0 0 18 14"><path d="M1 4q0-3 4-3 4 1 7 0 5-1 5 3 0 5-3 7-3-2-6-1-4 2-5 0Q1 8 1 4z" fill="#f4f4f4" stroke="#999"/></svg><span>IND_BangaloreNorth</span><i class="tri"></i></div>
      <div class="rend">
        <span class="rbrush"><svg class="i"><use href="#brs"/></svg></span>
        <div class="combo grow"><svg class="lic sm" viewBox="0 0 14 16"><path d="M2 1h10v3H2zM1 6h12v3H1zM2 11h10v3H2z" fill="#16a050" stroke="#0a6a30"/></svg><span>Single Symbol</span><i class="tri"></i></div>
      </div>
      <div class="body">
        <div class="strip">
          <svg class="si"><use href="#slab"/></svg><svg class="si"><use href="#sdia"/></svg><svg class="si"><use href="#s3d"/></svg><svg class="si"><use href="#sfl"/></svg><svg class="si"><use href="#shi"/></svg>
        </div>
        <div class="content">
          <div class="symrow">
            <div class="prevbox"><span class="prev"></span></div>
            <div class="stree">
              <div class="srow sel"><i class="tr"></i><span class="ssw gray"></span><b>Fill</b></div>
              <div class="srow child"><span class="ssw brown"></span><span>Simple Fill</span></div>
            </div>
            <div class="sbtns">
              <span class="sb"><svg viewBox="0 0 16 16"><path d="M6 1h4v5h5v4h-5v5H6v-5H1V6h5z" fill="#dff0df" stroke="#4a8a4a" stroke-width="1.200"/></svg></span>
              <span class="sb off"><svg viewBox="0 0 16 16"><path d="M8 2l7 11H1z" fill="#c8d4de" stroke="#aab"/></svg></span>
              <span class="sb off"><svg viewBox="0 0 16 16"><rect x="1" y="6" width="14" height="4" fill="#eee" stroke="#d8b0b0"/></svg></span>
              <span class="sb off"><svg viewBox="0 0 16 16"><path d="M8 14l7-11H1z" fill="#c8d4de" stroke="#aab"/></svg></span>
              <span class="sb off"><svg viewBox="0 0 16 16"><path d="M5 1h9v10H5z" fill="#eee" stroke="#bbb"/><path d="M1 5h9v10H1z" fill="#e4e4e4" stroke="#bbb"/></svg></span>
              <span class="sb off"><svg viewBox="0 0 16 16"><path d="M5 7V4q0-3 3-3t3 3" fill="none" stroke="#ccc" stroke-width="1.500"/><rect x="2" y="7" width="12" height="8" fill="#dcd8c8" stroke="#ccc"/></svg></span>
            </div>
          </div>
          <div class="hsep first"></div>
          <div class="frow colorrow"><label>Color</label><span class="colorbtn"><i></i></span><span class="colordrop"><i class="tri"></i></span></div>
          <div class="frow oprow"><label>Opacity</label><span class="slider"><i class="fillb"></i><i class="thumb"></i></span><span class="spin w100"><span>100.0 %</span><i class="sp"><i class="up"></i><i class="dn"></i></i></span><svg class="ddf"><use href="#ddf"/></svg></div>
          <div class="frow unitrow"><label>Unit</label><span class="combo grow ub"><span>Millimeters</span><i class="tri"></i></span></div>
          <div class="hsep second"></div>
          <div class="searchrow">
            <span class="search"><svg class="mg"><use href="#srch"/></svg><span class="stext">Favorites</span><svg class="bk" viewBox="0 0 14 10"><path d="M4 0h10v10H4L0 5z" fill="#999"/><path d="M6.500 2.500l5 5M11.500 2.500l-5 5" stroke="#fff" stroke-width="1.300"/></svg><i class="sdrop"><i class="tri"></i></i></span>
            <svg class="smi"><use href="#sty"/></svg>
          </div>
          <div class="list">
            <div class="grid">
              <div class="it"><svg class="sw2" viewBox="0 0 64 53"><rect x="1" y="1" width="62" height="51" fill="url(#plasma)" stroke="#232323" stroke-width="1.500"/></svg><p>gradient<br>plasma</p></div>
              <div class="it"><svg class="sw2" viewBox="0 0 64 53"><rect x="1" y="1" width="62" height="51" fill="#969696" stroke="#bbb"/></svg><p>gray 3 fill</p></div>
              <div class="it"><svg class="sw2" viewBox="0 0 64 53"><rect x="1" y="1" width="62" height="51" fill="#fff"/><rect x="1" y="1" width="62" height="51" fill="url(#hf)" stroke="#000" stroke-width="2"/></svg><p>hashed black /</p></div>
              <div class="it"><svg class="sw2" viewBox="0 0 64 53"><rect x="1" y="1" width="62" height="51" fill="#fff"/><rect x="1" y="1" width="62" height="51" fill="url(#hb)" stroke="#000" stroke-width="2"/></svg><p>hashed black \</p></div>
              <div class="it"><svg class="sw2" viewBox="0 0 64 53"><rect x="1" y="1" width="62" height="51" fill="#fff"/><rect x="1" y="1" width="62" height="51" fill="url(#hx)" stroke="#000" stroke-width="2"/></svg><p>hashed black<br>X</p></div>
              <div class="it"><svg class="sw2" viewBox="0 0 64 53"><rect x="2" y="2" width="60" height="49" rx="2" fill="#fff" stroke="#377eb8" stroke-width="3.500"/></svg><p>outline blue</p></div>
              <div class="it"><svg class="sw2" viewBox="0 0 64 53"><rect x="2" y="2" width="60" height="49" rx="2" fill="#fff" stroke="#4daf4a" stroke-width="3.500"/></svg><p>outline green</p></div>
              <div class="it"><svg class="sw2" viewBox="0 0 64 53"><rect x="2" y="2" width="60" height="49" rx="2" fill="#fff" stroke="#e41a1c" stroke-width="3.500"/></svg><p>outline red</p></div>
              <div class="it"><svg class="sw2" viewBox="0 0 64 53"><rect x="3" y="3" width="59" height="47" rx="2" fill="#f7f7f7" stroke="#999" stroke-width="1.500"/><g fill="#4daf4a"><circle cx="3.500" cy="3.500" r="3.500"/><circle cx="35" cy="3.500" r="3.500"/><circle cx="60" cy="10" r="3.500"/><circle cx="3.500" cy="24" r="3.500"/><circle cx="60" cy="39" r="3.500"/><circle cx="8" cy="49.500" r="3.500"/><circle cx="39" cy="49.500" r="3.500"/></g><g fill="#e41a1c"><circle cx="3.500" cy="7" r="3.500"/><circle cx="18" cy="3.500" r="3.500"/><circle cx="52" cy="3.500" r="3.500"/><circle cx="60" cy="25" r="3.500"/><circle cx="3.500" cy="39" r="3.500"/><circle cx="22" cy="49.500" r="3.500"/><circle cx="56" cy="49.500" r="3.500"/></g></svg><p>outline<br>xpattern</p></div>
              <div class="it"><svg class="sw2" viewBox="0 0 64 53"><rect x="1" y="1" width="62" height="51" fill="#fff"/><rect x="1" y="1" width="62" height="51" fill="url(#dots)" stroke="#333" stroke-width="1.500"/></svg><p>pattern dot<br>black</p></div>
              <div class="it"><svg class="sw2" viewBox="0 0 64 53"><rect x="0" y="0" width="64" height="53" fill="url(#zel)" stroke="#ff8020"/></svg><p>pattern zelda</p></div>
              <div class="it"><svg class="sw2" viewBox="0 0 64 53"><rect x=".5" y=".5" width="63" height="52" fill="#377eb8" stroke="#2f6a9a"/></svg><p>simple blue fill</p></div>
              <div class="it"><svg class="sw2" viewBox="0 0 64 53"><rect x=".5" y=".5" width="63" height="52" fill="#4daf4a" stroke="#3f8a3d"/></svg></div>
              <div class="it"><svg class="sw2" viewBox="0 0 64 53"><rect x=".5" y=".5" width="63" height="52" fill="#e41a1c" stroke="#a81618"/></svg></div>
            </div>
            <div class="sbar"><span class="sa"><i class="up"></i></span><span class="sthumb"></span><span class="strack"></span><span class="sa"><i class="dn"></i></span></div>
          </div>
          <div class="btnrow">
            <span class="vb on"><svg><use href="#gi"/></svg></span><span class="vb"><svg><use href="#li"/></svg></span>
            <span class="push"></span>
            <span class="pbtn save">Save Symbol...</span><span class="pbtn adv">Advanced<i class="tri s"></i></span>
          </div>
          <div class="lr"><i class="rt"></i><b>Layer Rendering</b></div>
          <div class="applyrow">
            <span class="ur"><svg viewBox="0 0 22 22"><path d="M10 3L2 10l8 7v-4q6-1 8 5 2-7-2-10-2-2-6-1z" fill="#e0743a"/></svg></span>
            <span class="ur"><svg viewBox="0 0 22 22"><path d="M12 3l8 7-8 7v-4q-6-1-8 5-2-7 2-10 2-2 6-1z" fill="#6aa86a"/></svg></span>
            <span class="push"></span>
            <span class="cb"><svg><use href="#chk"/></svg></span><span class="lu">Live update</span>
            <span class="pbtn apply"><svg viewBox="0 0 18 18"><path d="M2 9l5 7L16 2 7 11z" fill="#5a9a3a" stroke="#6e6e4a" stroke-width=".5"/></svg>Apply</span>
          </div>
        </div>
      </div>
      <div class="tabs rt2"><span class="tab act w110t">Layer Styling</span><span class="tab w150">Processing Toolbox</span></div>
    </section>
  </main>

  <footer class="status">
    <span class="locator"><svg><use href="#srch"/></svg><em>Type to locate (Ctrl+K)</em></span>
    <span class="msgtext">0 feature(s) selected on layer IND_Bangalore.</span>
    <span class="lab coord">Coordinate</span>
    <span class="inp w110"><span>77.8197,13.2277</span></span>
    <svg class="ms"><use href="#mse"/></svg>
    <span class="lab scale">Scale</span>
    <span class="inp w96"><span>1:237574</span><i class="sdrop2"><i class="tri"></i></i></span>
    <svg class="ms lock"><use href="#lk"/></svg>
    <span class="lab magn">Magnifier</span>
    <span class="inp w96"><span>100%</span><i class="sp2"><i class="up"></i><i class="dn"></i></i></span>
    <span class="lab rot">Rotation</span>
    <span class="inp w94"><span>0.0 °</span><i class="sp2"><i class="up"></i><i class="dn"></i></i></span>
    <span class="cb rchk"><svg><use href="#chk"/></svg></span>
    <span class="lab render">Render</span>
    <svg class="ms gs"><use href="#gls"/></svg>
    <span class="lab epsg">EPSG:4326</span>
    <svg class="ms msg"><use href="#msg"/></svg>
  </footer>
</div>
<svg class="defs"><symbol id="bxi" viewBox="0 0 26 26"><use href="#bx"/></symbol></svg>
</body>
</html>
```
FILE: styles.css
```css
* { box-sizing: border-box; }
html, body { margin: 0; padding: 0; }
body { width: 1922px; height: 1082px; overflow: hidden; font: 13px/16px "DejaVu Sans", sans-serif; color: #1c1c1c; background: #efefef; }
i { font-style: normal; display: block; }
.defs { display: block; width: 0; height: 0; }
.window { width: 1922px; height: 1082px; display: flex; flex-direction: column; background: #efefef; overflow: hidden; }

.titlebar { height: 38px; flex: none; background: #333; border-top: 1px solid #9a9a9a; display: grid; grid-template-columns: 1fr auto 1fr; align-items: center; color: #f2f2f2; font-size: 12px; }
.winbtns { display: flex; justify-content: flex-end; align-items: center; }
.wmin { width: 8px; height: 2px; background: #fff; margin: 6px 27px 0 0; }
.wmax { width: 6px; height: 6px; border: 2px solid #fff; margin: 0 22px 0 0; }
.wcls { width: 19px; height: 19px; border-radius: 50%; background: #f28b2a; margin-right: 9px; position: relative; }
.wcls::before, .wcls::after { content: ""; position: absolute; left: 4px; top: 8px; width: 11px; height: 2.5px; background: #fff; transform: rotate(45deg); }
.wcls::after { transform: rotate(-45deg); }

.menubar { height: 22px; flex: none; display: flex; align-items: center; padding-left: 3.5px; background: #f3f3f3; border-bottom: 1px solid #d4d4d4; }
.m { padding: 0 7.6px; white-space: nowrap; }

.toolbar { height: 39px; flex: none; display: flex; align-items: center; background: #f2f2f2; border-bottom: 1px solid #bdbdbd; }
.b { width: 33px; height: 36px; flex: none; display: flex; align-items: center; justify-content: center; }
.b.wide { width: 35px; }
.i { width: 26px; height: 26px; display: block; flex: none; }
.dis { opacity: .32; }
.faint { opacity: .42; }
.b.on { border: 1px solid #b5b5b5; background: #e0e0e0; border-radius: 3px; width: 32px; }
.dropbtn { width: 12px; height: 36px; flex: none; background: #dcdcdc; border: 1px solid #bcbcbc; border-radius: 3px; display: flex; align-items: center; justify-content: center; margin-right: 1px; }
.dropbtn i, .ar::before, .tri { width: 0; height: 0; border-left: 4px solid transparent; border-right: 4px solid transparent; border-top: 4px solid #444; }
.h { width: 16px; height: 22px; flex: none; position: relative; }
.h.first { width: 13.5px; }
.h.short { width: 14px; }
.h.tall { width: 18px; }
.h::before { content: ""; position: absolute; left: 5px; top: 2px; width: 5px; height: 18px; background: radial-gradient(circle, #c0c0c0 .8px, transparent 1px) 0 0 / 2.5px 3px; }
.s { width: 6px; height: 26px; flex: none; position: relative; }
.s::before { content: ""; position: absolute; left: 2px; top: 0; width: 1px; height: 26px; background: #c8c8c8; }
.ar { width: 12px; flex: none; display: flex; justify-content: center; align-items: center; height: 10px; }
.ar::before { content: ""; }
.ar.dim { opacity: .28; }

.work { height: 912px; flex: none; display: flex; }
.lefttb { width: 52px; flex: none; border-right: 1px solid #c8c8c8; background: linear-gradient(to right, #fafafa, #ededed); display: flex; flex-direction: column; padding-top: 4px; }
.vh { width: 18px; height: 5px; margin: 0 0 0 19px; background: radial-gradient(circle, #c0c0c0 .8px, transparent 1px) 0 0 / 3px 2.5px; flex: none; }
.vh.second { margin-top: 10px; }
.lb { height: 32.5px; flex: none; display: flex; align-items: center; justify-content: center; padding-left: 4px; }
.lb.top { margin-top: 1px; }
.lb.last { height: 35px; margin-top: 4px; }
.vsep { height: 1px; background: #dcdcdc; margin: 4px 3px 0 11px; flex: none; }
.lb2 { height: 32.3px; flex: none; display: flex; align-items: center; padding-left: 8px; }
.lb2 .ar { margin-left: 4px; }

.layers { width: 426px; flex: none; display: flex; flex-direction: column; }
.phead { height: 22px; flex: none; display: flex; align-items: center; justify-content: space-between; padding: 0 5px 2px 5px; }
.pbtns { display: flex; gap: 2px; }
.pi { width: 13px; height: 13px; display: block; }
.ltools { height: 28px; flex: none; display: flex; align-items: center; padding: 0 0 4px 5px; }
.lt { width: 25px; height: 25px; flex: none; display: flex; align-items: center; justify-content: center; }
.lt.on { width: 24px; height: 24px; margin-right: 1px; background: #e2e2e2; border: 1px solid #bbb; border-radius: 2px; }
.i2 { width: 21px; height: 21px; display: block; }
.ar.sm { width: 10px; margin: 0 5px 0 -2px; }
.ltree { width: 420px; height: 833px; margin-left: 1px; flex: none; background: #fff; border: 1px solid #b8b8b8; border-bottom-width: 2px; }
.lrow { height: 19px; display: flex; align-items: center; padding-left: 23px; }
.lrow .sw { width: 16px; height: 16px; margin: 0 6px 0 6px; flex: none; }
.lrow.sel { background: #2e8ac6; color: #fff; }
.u { text-decoration: underline; }
.sw.north { background: #807877; border: 1px solid #5d5654; }
.sw.south { background: #ff9f18; border: 1px solid #b87618; }
.cb { width: 14px; height: 14px; flex: none; background: #fff; border: 1px solid #b4b4b4; border-radius: 1px; display: block; }
.cb svg { width: 12px; height: 12px; display: block; }
.tabs { flex: none; display: flex; align-items: flex-start; height: 28px; padding-left: 1px; }
.tab { height: 23px; margin-top: 2px; display: flex; align-items: center; justify-content: center; background: #dcdcdc; border: 1px solid #bcbcbc; border-top: 0; border-radius: 0 0 3px 3px; flex: none; }
.tab.act { height: 27px; margin-top: 0; background: #f4f4f4; padding-top: 3px; }
.w68 { width: 68px; }
.w77 { width: 77px; }
.w110t { width: 110px; }
.w150 { width: 150px; }

.map { flex: 1; min-width: 0; margin-left: 2px; background: #fff; border-left: 1px solid #bdbdbd; border-right: 1px solid #bdbdbd; border-bottom: 1px solid #bdbdbd; }
.mapsvg { width: 100%; height: 100%; display: block; }
.north-p { fill: #a26f57; stroke: #3d3d3d; stroke-width: .75; stroke-linejoin: round; }
.south-p { fill: #ff9f18; stroke: #3d3d3d; stroke-width: .75; stroke-linejoin: round; }

.styling { width: 546px; flex: none; padding: 0 4px 0 7px; display: flex; flex-direction: column; }
.phead.r { padding: 0 1px 2px 1px; }
.combo { height: 23px; flex: none; display: flex; align-items: center; padding: 0 6px 0 5px; background: linear-gradient(#f6f6f6, #ececec); border: 1px solid #b6b6b6; border-radius: 3px; }
.combo.top1 { margin-top: 1px; }
.combo span { flex: 1; }
.lic { width: 18px; height: 14px; margin-right: 2px; }
.lic.sm { width: 14px; height: 16px; margin-right: 5px; }
.tri { flex: none; }
.rend { display: flex; height: 24px; margin-top: 7px; flex: none; }
.rbrush { width: 41px; flex: none; display: flex; align-items: center; justify-content: center; padding-right: 6px; }
.combo.grow { flex: 1; height: auto; padding-top: 1px; }
.body { display: flex; margin-top: 8px; flex: none; height: 794px; }
.strip { width: 38px; flex: none; background: #5f5f5f; display: flex; flex-direction: column; align-items: center; padding: 4px 7px 0 0; gap: 8px; }
.si { width: 24px; height: 24px; display: block; flex: none; }
.content { margin-left: 3px; width: 494px; flex: none; display: flex; flex-direction: column; }
.symrow { height: 122px; flex: none; display: flex; }
.prevbox { width: 125px; flex: none; padding: 34px 0 0 29px; }
.prev { display: block; width: 61px; height: 61px; background: #a26f57; border: 1px solid #232323; }
.stree { width: 301px; height: 118px; margin-top: 4px; flex: none; background: #fff; border: 1px solid #b4b4b4; }
.srow { height: 19px; display: flex; align-items: center; }
.srow.sel { background: #2e8ac6; color: #fff; }
.srow .tr { width: 0; height: 0; margin: 0 6px 0 7px; border-left: 4px solid transparent; border-right: 4px solid transparent; border-top: 4px solid #222; }
.ssw { width: 16px; height: 16px; display: block; flex: none; margin-right: 6px; }
.ssw.gray { background: #807877; border: 1px solid #5d5654; }
.ssw.brown { background: #a26f57; border: 1px solid #3a3a3a; }
.srow.child { padding-left: 43px; }
.sbtns { margin-left: 7px; width: 61px; height: 79px; display: grid; grid-template-columns: 27px 28px; column-gap: 6px; row-gap: 3px; grid-auto-rows: 24px; }
.sb { border: 1px solid #bcbcbc; border-radius: 3px; background: #f2f2f2; display: flex; align-items: center; justify-content: center; }
.sb svg { width: 16px; height: 16px; display: block; }
.hsep { height: 1px; background: #c0c0c0; flex: none; }
.hsep.first { margin-top: 13px; }
.hsep.second { margin-top: 4px; width: 485px; }
.frow { display: flex; align-items: center; flex: none; }
.frow label { width: 56px; flex: none; }
.colorrow { height: 28px; margin-top: 8px; }
.colorrow label { padding-top: 1px; }
.colorbtn { width: 416px; height: 28px; flex: none; padding: 5px 4px; background: #f3f3f3; border: 1px solid #b8b8b8; border-radius: 3px; }
.colorbtn i { height: 16px; background: #a26f57; border-radius: 3px; }
.colordrop { width: 12px; height: 28px; flex: none; margin-left: 1px; border: 1px solid #b8b8b8; border-radius: 3px; background: #f3f3f3; display: flex; align-items: center; justify-content: center; }
.colordrop .tri { border-left-width: 3px; border-right-width: 3px; }
.oprow { height: 21px; margin-top: 8px; }
.slider { width: 288px; height: 14px; flex: none; position: relative; margin-left: 1px; }
.fillb { position: absolute; left: 0; top: 5px; width: 278px; height: 5px; background: #3a96d6; border: 1px solid #2a76b0; border-radius: 2px; }
.thumb { position: absolute; left: 275px; top: 0; width: 13px; height: 14px; background: #f6f6f6; border: 1px solid #a8a8a8; border-radius: 3px; }
.spin { width: 100px; height: 22px; flex: none; margin-left: 4px; background: #fff; border: 1px solid #b8b8b8; border-radius: 3px; display: flex; align-items: center; padding-left: 4px; position: relative; }
.sp, .sp2 { position: absolute; right: 0; top: 0; bottom: 0; width: 14px; border-left: 1px solid #ccc; display: flex; flex-direction: column; align-items: center; justify-content: center; gap: 3px; }
.up, .dn { width: 0; height: 0; border-left: 4px solid transparent; border-right: 4px solid transparent; }
.up { border-bottom: 4px solid #555; }
.dn { border-top: 4px solid #555; }
.ddf { width: 22px; height: 22px; margin-left: 9px; flex: none; display: block; }
.unitrow { height: 25px; margin-top: 9px; width: 485px; }
.ub { height: 25px !important; padding-left: 3px; }
.searchrow { height: 24px; margin-top: 7px; flex: none; display: flex; align-items: center; }
.search { width: 455px; height: 25px; flex: none; background: #fff; border: 1px solid #b8b8b8; border-radius: 3px; display: flex; align-items: center; padding-left: 10px; position: relative; }
.mg { width: 14px; height: 14px; flex: none; margin-right: 5px; }
.stext { flex: 1; }
.bk { width: 14px; height: 10px; margin-right: 28px; }
.sdrop { position: absolute; right: 0; top: 0; bottom: 0; width: 21px; border-left: 1px solid #ccc; background: #f2f2f2; border-radius: 0 3px 3px 0; display: flex; align-items: center; justify-content: center; }
.smi { width: 20px; height: 20px; margin-left: 4px; }
.list { width: 484px; height: 418px; margin-top: 4px; flex: none; background: #fff; border: 1px solid #b8b8b8; display: flex; overflow: hidden; }
.grid { width: 469px; height: 416px; overflow: hidden; flex: none; padding: 21px 0 0 2px; display: grid; grid-template-columns: repeat(4, 101px); grid-auto-rows: 119px; }
.it { text-align: center; }
.sw2 { width: 64px; height: 53px; display: block; margin: 0 auto; }
.it p { margin: 15px 0 0; font-size: 12px; line-height: 16px; white-space: nowrap; }
.sbar { width: 14px; flex: none; display: flex; flex-direction: column; border-left: 1px solid #d8d8d8; }
.sa { height: 14px; flex: none; display: flex; align-items: center; justify-content: center; background: #f5f5f5; }
.sthumb { height: 338px; flex: none; background: #fbfbfb; }
.strack { flex: 1; background: #e2e2e2; }
.btnrow { height: 24px; margin-top: 7px; width: 484px; flex: none; display: flex; align-items: center; }
.vb { width: 24px; height: 23px; flex: none; display: flex; align-items: center; justify-content: center; margin-right: 1px; }
.vb.on { background: #dedede; border: 1px solid #bbb; border-radius: 3px; }
.vb svg { width: 18px; height: 18px; display: block; }
.push { flex: 1; }
.pbtn { height: 24px; flex: none; display: flex; align-items: center; justify-content: center; padding-top: 1px; background: #f3f3f3; border: 1px solid #b8b8b8; border-radius: 3px; }
.save { width: 106px; margin-right: 6px; }
.adv { width: 84px; }
.tri.s { margin-left: 7px; border-left-width: 3px; border-right-width: 3px; border-top-width: 3px; }
.lr { height: 19px; margin-top: 22px; flex: none; display: flex; align-items: center; padding-left: 5px; }
.rt { width: 0; height: 0; margin-right: 10px; border-top: 5px solid transparent; border-bottom: 5px solid transparent; border-left: 7px solid #333; }
.applyrow { height: 24px; margin-top: 5px; flex: none; display: flex; align-items: center; }
.ur { width: 24px; height: 23px; flex: none; display: flex; align-items: center; justify-content: center; margin-right: 6px; border: 1px solid #bcbcbc; border-radius: 3px; background: #f3f3f3; }
.ur svg { width: 16px; height: 16px; display: block; }
.lu { margin: 1px 14px 0 5px; }
.apply { width: 80px; justify-content: flex-start; padding-left: 12px; gap: 0; }
.apply svg { width: 17px; height: 18px; }
.rt2 { margin-top: 4px; margin-left: -4px; padding-left: 0; width: 542px; border-top: 1px solid #c4c4c4; height: 28px; }
.rt2 .tab { margin-top: 1px; }
.rt2 .tab.act { margin-top: -1px; height: 27px; border-top: 0; }

.status { height: 32px; flex: none; display: flex; align-items: center; font-size: 11px; background: #efefef; border-bottom: 1px solid #b8b8b8; padding-left: 5px; }
.locator { width: 270px; height: 24px; flex: none; background: #fff; border: 1px solid #bbb; border-radius: 3px; display: flex; align-items: center; padding-left: 8px; font-size: 13px; color: #a8a8a8; }
.locator svg { width: 15px; height: 15px; margin-right: 5px; display: block; }
.locator em { font-style: italic; }
.msgtext { width: 757px; flex: none; padding: 1px 0 0 8px; white-space: nowrap; color: #222; }
.lab { flex: none; white-space: nowrap; color: #333; padding-top: 1px; }
.coord { width: 65px; }
.inp { height: 23px; flex: none; background: #fff; border: 1px solid #bbb; border-radius: 3px; display: flex; align-items: center; padding: 1px 0 0 4px; font-size: 11px; position: relative; color: #222; }
.w110 { width: 110px; padding-left: 6px; }
.w96 { width: 96px; }
.w94 { width: 94px; }
.sdrop2 { position: absolute; right: 0; top: 0; bottom: 0; width: 19px; border-left: 1px solid #ccc; background: #f2f2f2; border-radius: 0 3px 3px 0; display: flex; align-items: center; justify-content: center; }
.sp2 { width: 15px; gap: 3px; }
.ms { width: 20px; height: 20px; display: block; flex: none; }
.scale { width: 33px; margin-left: 12px; }
.status > .ms:first-of-type { margin-left: 2px; }
.lock { margin-left: 9px; }
.magn { width: 56px; margin-left: 5px; }
.rot { width: 56px; margin-left: 10px; }
.rchk { margin-left: 7px; }
.render { width: 54px; margin-left: 4px; }
.epsg { width: 80px; }

.t11 { font-size: 11px; fill: #333; }
.t8 { font-size: 8px; fill: #555; font-weight: bold; }
.t8b { font-size: 8px; fill: #222; font-weight: bold; }
.t8r { font-size: 8px; fill: #e01818; font-weight: bold; }
.t8g { font-size: 8px; fill: #777; font-weight: bold; }
.ti { font: italic bold 14px "Liberation Serif", serif; fill: #fff; }
.ts { font: bold 26px "Liberation Serif", serif; fill: #a0109c; }
.tt { font: 14px "Liberation Serif", serif; fill: #333; }
.tq { font: 14px "Liberation Serif", serif; fill: #cde; }
.te { font: 17px "Liberation Serif", serif; fill: #4a2a7a; }
```
